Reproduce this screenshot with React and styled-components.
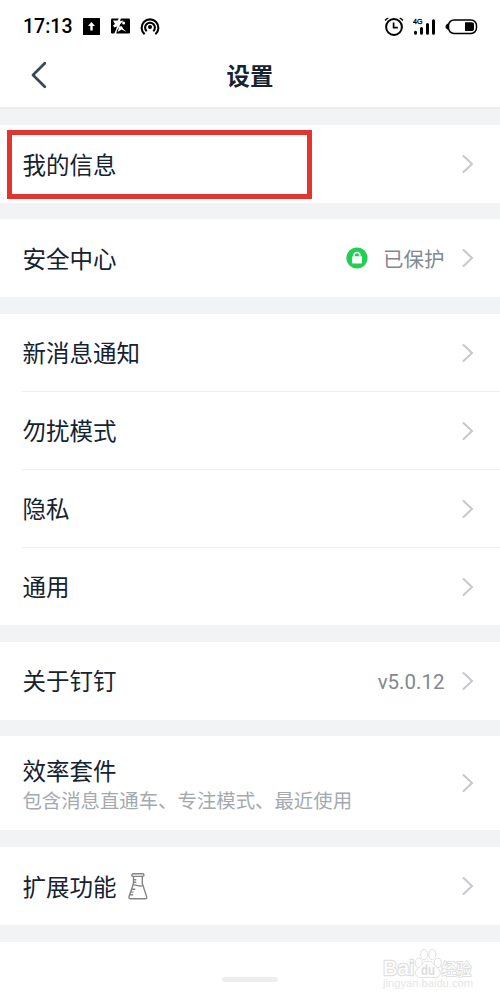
import React from "react";
import styled, { createGlobalStyle } from "styled-components";

const GlobalStyle = createGlobalStyle`
  *, *::before, *::after { box-sizing: border-box; }
  html, body { margin: 0; padding: 0; background: #fff; overflow: hidden; }
  body { font-family: Roboto, "Noto Sans CJK SC", sans-serif; color: #15222f; }
  svg { display: block; flex: none; }
`;

const Screen = styled.main`
  width: 500px;
  height: 1000px;
  overflow: hidden;
  display: flex;
  flex-direction: column;
  background: #f2f3f5;
`;

const StatusBar = styled.div`
  height: 44px;
  flex: none;
  background: #fff;
  display: flex;
  align-items: center;
  justify-content: space-between;
  padding: 9px 22px 0 23px;
`;

const StatusGroup = styled.div`
  display: flex;
  align-items: center;
  gap: ${(p) => p.$gap}px;
`;

const Clock = styled.span`
  font-size: 19.5px;
  line-height: 24px;
  font-weight: 500;
  color: #000;
  width: 49px;
  padding-top: 1px;
  white-space: nowrap;
`;

const NavBar = styled.header`
  height: 65px;
  flex: none;
  background: #fff;
  border-bottom: 2px solid #ebecee;
  display: grid;
  grid-template-columns: 100px 1fr 100px;
  align-items: center;
  margin-bottom: 16px;
`;

const BackButton = styled.button`
  border: 0;
  background: none;
  padding: 0 0 1px 30px;
`;

const Title = styled.h1`
  margin: 0;
  padding-top: 2px;
  font-size: 23.4px;
  line-height: 34px;
  font-weight: 700;
  text-align: center;
`;

const Group = styled.section`
  position: relative;
  flex: none;
  height: ${(p) => p.$height}px;
  margin-bottom: ${(p) => p.$after ?? 16.5}px;
  background: #fff;
  display: flex;
  flex-direction: column;
`;

const Row = styled.div`
  flex: 1;
  margin-left: 22.4px;
  padding-right: 26.5px;
  display: flex;
  align-items: center;
  justify-content: space-between;
  & + & { border-top: 1px solid #eeeff1; }
`;

const Label = styled.div`
  display: flex;
  align-items: center;
  gap: 11.5px;
  padding-top: ${(p) => (p.$flush ? 2 : 3.5)}px;
  font-size: 23.5px;
  line-height: 34px;
  white-space: nowrap;
  svg { margin-top: -2px; }
`;

const Summary = styled.div`
  padding-top: 1px;
`;

const Caption = styled.div`
  font-size: 19.4px;
  line-height: 26px;
  color: #a4a9b0;
  white-space: nowrap;
`;

const Trailing = styled.div`
  display: flex;
  align-items: center;
  font-size: 20.5px;
  line-height: 30px;
  color: #818890;
`;

const Value = styled.span`
  margin: ${(p) => p.$drop ?? 2}px 17px 0 15px;
`;

const Highlight = styled.div`
  position: absolute;
  left: 7px;
  top: 5px;
  width: 304.5px;
  height: 69px;
  border: 5.5px solid #e1362f;
`;

const Footer = styled.footer`
  position: relative;
  flex: 1;
  background: #fff;
  display: flex;
  justify-content: center;
  padding-top: 35.5px;
`;

const HomeIndicator = styled.div`
  width: 56px;
  height: 5px;
  border-radius: 3px;
  background: #eee;
`;

const Watermark = styled.div`
  position: absolute;
  left: 382px;
  top: 3px;
`;

const Chevron = () => (
  <svg width="12" height="20" viewBox="0 0 12 20" fill="none" stroke="#c5c8cd" strokeWidth="2" strokeLinecap="round">
    <path d="M1.5 2 10 10 1.5 18" />
  </svg>
);

const BackIcon = () => (
  <svg width="18" height="28" viewBox="0 0 18 28" fill="none" stroke="#394653" strokeWidth="2.7" strokeLinecap="round" strokeLinejoin="round">
    <path d="M14.8 2.2 3 14l11.8 11.8" />
  </svg>
);

const UploadIcon = () => (
  <svg width="17" height="17" viewBox="0 0 17 17">
    <rect width="17" height="17" rx=".6" />
    <path d="M8.5 4 12 8H9.7v4.6H7.3V8H5Z" fill="#fff" />
  </svg>
);

const PictureIcon = () => (
  <svg width="19" height="17" viewBox="0 0 19 17">
    <rect y=".5" width="19" height="15" rx="1.3" />
    <path d="M2 2.6H6.6L8 0h2L9 3l3.5-.4L9 6.6 8.5 8.6 6 12.2 5 17H2.6l2.6-5.8.8-2.8L3.4 9.6 2 7.5l2-1.4Z" fill="#fff" />
    <path d="M8.3 8.6 10.8 8.2 12.4 11 15.6 14 10.6 11.6 6.6 14Z" fill="#fff" />
    <circle cx="12.6" cy="5" r="1.5" fill="#fff" />
  </svg>
);

const CastIcon = () => (
  <svg width="20" height="19" viewBox="0 0 20 19" fill="none" stroke="#000" strokeWidth="2.1">
    <path d="M4.6 17.2a8.4 8.4 0 1 1 10.8 0" />
    <path d="M6.7 14.2a4.9 4.9 0 1 1 6.6 0" />
    <circle cx="10" cy="10" r="2" fill="#000" stroke="none" />
  </svg>
);

const AlarmIcon = () => (
  <svg width="20" height="19" viewBox="0 0 20 19" fill="none" stroke="#000">
    <circle cx="10" cy="10" r="7.9" strokeWidth="2" />
    <path d="M9.6 5.5v5.1h4.2" strokeWidth="1.7" />
    <path d="M1.2 3.5C2 2.2 3 1.5 4.3 1.1M18.8 3.5C18 2.2 17 1.5 15.7 1.1" strokeWidth="1.5" />
  </svg>
);

const SignalIcon = () => (
  <svg width="23" height="18" viewBox="0 0 23 18">
    <g stroke="#000" strokeWidth="3" strokeLinecap="round">
      <path d="M2.5 14.3v1M8.5 10.4v4.9M14.5 6.5v8.8M20.5 2.7v12.6" />
    </g>
    <text x="0" y="6.4" fontFamily="Liberation Sans, sans-serif" fontSize="7.6" stroke="#000" strokeWidth=".3" textLength="9.5" lengthAdjust="spacingAndGlyphs">4G</text>
  </svg>
);

const BatteryIcon = () => (
  <svg width="33" height="16" viewBox="0 0 33 16">
    <rect x="3.5" y="1" width="28" height="13.5" rx="5.5" fill="none" stroke="#000" strokeWidth="1.5" />
    <path d="M3.5 4.6C1.8 4.8.5 6 .5 7.7S1.8 10.5 3.5 10.8Z" />
    <path d="M20 3.3h6.3Q29 3.3 29 5.7v4Q29 12 26.3 12H20Z" />
  </svg>
);

const ShieldLock = () => (
  <svg width="22" height="22" viewBox="0 0 22 22">
    <circle cx="11" cy="11" r="10.6" fill="#22cf54" />
    <rect x="6.1" y="9.3" width="9.9" height="7.2" rx=".8" fill="#fff" />
    <path d="M8.1 9.5V8.3a2.9 2.9 0 0 1 5.8 0v1.2" fill="none" stroke="#fff" strokeWidth="1.5" />
  </svg>
);

const FlaskIcon = () => (
  <svg width="20" height="27" viewBox="0 0 20 27" fill="none" stroke="#858585" strokeWidth="1.4" strokeLinejoin="round" strokeLinecap="round">
    <rect x="3.8" y=".8" width="12.2" height="2.6" rx="1.3" />
    <path d="M5.5 3.5v7L1 23.8Q.6 25.8 2.5 25.8h14.7q1.9 0 1.5-2L14.3 10.5v-7M5 12.2c3-1.4 5 2 9.7.4M6.7 6.7h1.1M6.7 9.2h1.1M4.2 16.2h2.6M3.3 19.1h1.8M2.4 21.8h2.3" />
  </svg>
);

const BaiduMark = () => (
  <svg width="100" height="48" viewBox="0 0 100 48" fill="#fff" stroke="#e0e0e0" strokeWidth="1">
    <text x="1" y="30" fontFamily="Liberation Sans, sans-serif" fontSize="21" textLength="31" lengthAdjust="spacingAndGlyphs" strokeWidth="2.4" paintOrder="stroke">Bai</text>
    <ellipse cx="36.7" cy="18" rx="3.6" ry="4.8" />
    <ellipse cx="42.2" cy="9.5" rx="3.6" ry="5.2" />
    <ellipse cx="50.3" cy="9.5" rx="3.6" ry="5.2" />
    <ellipse cx="55.8" cy="18" rx="3.6" ry="4.8" />
    <path d="M46 16.2c-5.8 0-5.5 4.2-9.3 6.5-5.8 4.3-3.2 10 2 10 2.7 0 4.8-.5 7.3-.5s4.6.5 7.1.5c5.2 0 7.5-5.8 2-10-3.6-2.4-3.5-6.5-9.1-6.5Z" />
    <text x="39" y="29.5" fill="#dcdcdc" stroke="none" fontFamily="Liberation Sans, sans-serif" fontSize="14" fontWeight="700" textLength="14" lengthAdjust="spacingAndGlyphs">du</text>
    <text x="59.5" y="29.5" fontFamily="Noto Sans CJK SC, sans-serif" fontSize="15.5" fontWeight="400" textLength="30" lengthAdjust="spacingAndGlyphs" strokeWidth="1.8" paintOrder="stroke">经验</text>
    <text x="1" y="42" fill="#e6e6e6" stroke="none" fontFamily="Liberation Sans, sans-serif" fontSize="11" textLength="90" lengthAdjust="spacingAndGlyphs">jingyan.baidu.com</text>
  </svg>
);

export default function App() {
  return (
    <>
      <GlobalStyle />
      <Screen>
        <StatusBar>
          <StatusGroup $gap={10.8}>
            <Clock>17:13</Clock>
            <UploadIcon />
            <PictureIcon />
            <CastIcon />
          </StatusGroup>
          <StatusGroup $gap={9}>
            <AlarmIcon />
            <SignalIcon />
            <BatteryIcon />
          </StatusGroup>
        </StatusBar>
        <NavBar>
          <BackButton aria-label="返回"><BackIcon /></BackButton>
          <Title>设置</Title>
        </NavBar>

        <Group $height={78} $after={16}>
          <Row><Label>我的信息</Label><Chevron /></Row>
          <Highlight />
        </Group>

        <Group $height={78} $after={17}>
          <Row>
            <Label>安全中心</Label>
            <Trailing><ShieldLock /><Value $drop={3}>已保护</Value><Chevron /></Trailing>
          </Row>
        </Group>

        <Group $height={311}>
          {["新消息通知", "勿扰模式", "隐私", "通用"].map((name) => (
            <Row key={name}><Label>{name}</Label><Chevron /></Row>
          ))}
        </Group>

        <Group $height={78}>
          <Row>
            <Label>关于钉钉</Label>
            <Trailing><Value>v5.0.12</Value><Chevron /></Trailing>
          </Row>
        </Group>

        <Group $height={94} $after={17}>
          <Row>
            <Summary>
              <Label $flush>效率套件</Label>
              <Caption>包含消息直通车、专注模式、最近使用</Caption>
            </Summary>
            <Chevron />
          </Row>
        </Group>

        <Group $height={78}>
          <Row><Label>扩展功能<FlaskIcon /></Label><Chevron /></Row>
        </Group>

        <Footer>
          <HomeIndicator />
          <Watermark><BaiduMark /></Watermark>
        </Footer>
      </Screen>
    </>
  );
}
